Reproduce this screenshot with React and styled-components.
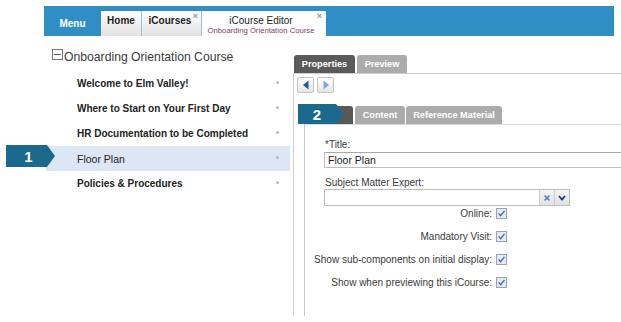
import React from "react";
import styled, { createGlobalStyle } from "styled-components";

const Global = createGlobalStyle`
  html, body { margin: 0; padding: 0; background: #fff; }
  body { font-family: "Liberation Sans", Arial, sans-serif; color: #333; }
`;

const Page = styled.div`
  width: 621px;
  height: 316px;
  display: flex;
  flex-direction: column;
  overflow: hidden;
`;

const TopBar = styled.div`
  margin: 6px 0 0 44px;
  width: 570px;
  height: 30px;
  background: #2f8fc4;
  display: flex;
  align-items: flex-end;
`;

const MenuTab = styled.div`
  width: 57px;
  height: 30px;
  box-sizing: border-box;
  padding-top: 4px;
  display: flex;
  align-items: center;
  justify-content: center;
  color: #fff;
  font-weight: bold;
  font-size: 10px;
`;

const Tab = styled.div`
  position: relative;
  width: ${(p) => p.$w}px;
  height: 25px;
  box-sizing: border-box;
  padding-top: 4px;
  padding-right: ${(p) => p.$pr || 0}px;
  border-right: 1px solid #8fc3e0;
  background: linear-gradient(#ffffff, #e2e2e2);
  font-size: 10px;
  font-weight: bold;
  color: #222;
  line-height: 12px;
  text-align: center;
`;

const ActiveTab = styled.div`
  position: relative;
  width: 124px;
  height: 25px;
  box-sizing: border-box;
  padding: 4px 6px 0 0;
  background: #fff;
  text-align: center;
`;

const TabTitle = styled.div`
  font-size: 10px;
  line-height: 11px;
  color: #222;
`;

const TabSub = styled.div`
  font-size: 7.7px;
  line-height: 9px;
  color: #7e3d63;
`;

const Close = styled.span`
  position: absolute;
  top: 1px;
  right: ${(p) => p.$r}px;
  font-size: 9px;
  font-weight: bold;
  color: #999;
  line-height: 9px;
`;

const Main = styled.div`
  flex: 1;
  display: flex;
  min-height: 0;
`;

const LeftPanel = styled.div`
  width: 293px;
  flex: none;
`;

const TreeHeader = styled.div`
  margin: 12px 0 0 52px;
  display: flex;
  align-items: flex-start;
  gap: 1px;
  font-size: 12.2px;
  line-height: 18px;
  color: #3a3a3a;
`;

const MinusBox = styled.span`
  margin-top: 1px;
  width: 11px;
  height: 11px;
  box-sizing: border-box;
  border: 1px solid #777;
  background: #fff;
  display: flex;
  align-items: center;
  justify-content: center;
  &::after {
    content: "";
    width: 7px;
    height: 1px;
    background: #555;
  }
`;

const TreeList = styled.div`
  margin-top: 5px;
  display: flex;
  flex-direction: column;
`;

const TreeRow = styled.div`
  position: relative;
  margin-left: 46px;
  width: 244px;
  height: 25px;
  box-sizing: border-box;
  padding: 0 11px 0 31px;
  display: flex;
  align-items: center;
  justify-content: space-between;
  background: ${(p) => (p.$selected ? "#dce6f5" : "transparent")};
  font-size: ${(p) => (p.$selected ? "10.5px" : "10px")};
  font-weight: ${(p) => (p.$selected ? "normal" : "bold")};
  color: #222;
`;

const Dot = styled.span`
  width: 3px;
  height: 3px;
  border-radius: 50%;
  background: #bbb;
  margin-top: -3px;
`;

const Callout = styled.div`
  position: absolute;
  left: ${(p) => p.$left}px;
  top: -1px;
  width: ${(p) => p.$w}px;
  height: ${(p) => p.$h}px;
  box-sizing: border-box;
  padding-right: ${(p) => p.$pr}px;
  background: #1b6a8e;
  clip-path: polygon(0 0, calc(100% - 8px) 0, 100% 50%, calc(100% - 8px) 100%, 0 100%);
  color: #fff;
  font-weight: bold;
  font-size: 15px;
  display: flex;
  align-items: center;
  justify-content: center;
  z-index: 2;
`;

const RightPanel = styled.div`
  flex: 1;
  padding-top: 19px;
  display: flex;
  flex-direction: column;
  min-width: 0;
`;

const TopTabs = styled.div`
  display: flex;
  gap: 2px;
  margin-left: 1px;
`;

const PanelTab = styled.div`
  width: ${(p) => p.$w}px;
  height: 18px;
  border-radius: 3px 3px 0 0;
  background: ${(p) => (p.$active ? "#5a5a5a" : "#ababab")};
  color: #fff;
  font-size: 9.2px;
  font-weight: bold;
  display: flex;
  align-items: center;
  justify-content: center;
`;

const TabBody = styled.div`
  flex: 1;
  border-top: 1px solid #cfcfcf;
  border-left: 1px solid #cfcfcf;
  display: flex;
  flex-direction: column;
`;

const NavRow = styled.div`
  display: flex;
  gap: 3px;
  padding: 3px 0 0 3px;
`;

const NavButton = styled.div`
  width: 17px;
  height: 16px;
  box-sizing: border-box;
  border: 1px solid #c4c4c4;
  border-radius: 2px;
  background: linear-gradient(#ffffff, #e6e6e6);
  display: flex;
  align-items: center;
  justify-content: center;
`;

const StepArea = styled.div`
  position: relative;
  flex: 1;
  margin: 12px 0 0 10px;
  display: flex;
  flex-direction: column;
`;

const StepTabs = styled.div`
  display: flex;
  gap: 1px;
  margin-top: 1px;
`;

const StepTab = styled.div`
  width: ${(p) => p.$w}px;
  height: 18px;
  border-radius: 3px 3px 0 0;
  background: ${(p) => (p.$active ? "#585858" : "#ababab")};
  color: #fff;
  font-size: 9.2px;
  font-weight: bold;
  display: flex;
  align-items: center;
  justify-content: center;
  margin-right: ${(p) => p.$mr || 0}px;
`;

const StepBody = styled.div`
  flex: 1;
  border-top: 1px solid #dadada;
  border-left: 1px solid #c8c8c8;
  padding: 14px 0 0 20px;
`;

const Label = styled.div`
  font-size: 10px;
  line-height: 12px;
  color: #3a3a3a;
  margin-top: ${(p) => p.$mt || 0}px;
`;

const TextInput = styled.div`
  margin: 1px 0 0 -1px;
  width: 320px;
  height: 16px;
  box-sizing: border-box;
  border: 1px solid #bdbdbd;
  border-top-color: #a9a9a9;
  padding-left: 3px;
  font-size: 10.5px;
  line-height: 14px;
  color: #222;
`;

const Combo = styled.div`
  margin-left: -1px;
  width: 246px;
  height: 17px;
  box-sizing: border-box;
  border: 1px solid #bdbdbd;
  display: flex;
`;

const ComboField = styled.div`
  flex: 1;
`;

const ComboButton = styled.div`
  width: 14px;
  border-left: 1px solid #cdcdcd;
  background: linear-gradient(#f4f4f4, #e2e2e2);
  display: flex;
  align-items: center;
  justify-content: center;
`;

const CheckList = styled.div`
  margin-left: -20px;
  width: 202px;
  display: flex;
  flex-direction: column;
  gap: 9px;
`;

const CheckRow = styled.div`
  height: 14px;
  display: flex;
  align-items: center;
  justify-content: flex-end;
  gap: 4px;
  font-size: 10px;
  color: #3a3a3a;
  white-space: nowrap;
`;

const CheckBox = () => (
  <svg width="11" height="11" viewBox="0 0 11 11">
    <rect x="0.5" y="0.5" width="10" height="10" fill="#e3eaf6" stroke="#9aa3b0" />
    <path d="M2.6 5.4 L4.6 7.7 L8.5 2.8" fill="none" stroke="#4466bb" strokeWidth="1.3" />
  </svg>
);

const items = [
  "Welcome to Elm Valley!",
  "Where to Start on Your First Day",
  "HR Documentation to be Completed",
  "Floor Plan",
  "Policies & Procedures",
];

const checks = [
  "Online:",
  "Mandatory Visit:",
  "Show sub-components on initial display:",
  "Show when previewing this iCourse:",
];

export default function App() {
  return (
    <>
      <Global />
      <Page>
        <TopBar>
          <MenuTab>Menu</MenuTab>
          <Tab $w={41}>Home</Tab>
          <Tab $w={60} $pr={3}>
            iCourses
            <Close $r={3}>×</Close>
          </Tab>
          <ActiveTab>
            <TabTitle>iCourse Editor</TabTitle>
            <TabSub>Onboarding Orientation Course</TabSub>
            <Close $r={4}>×</Close>
          </ActiveTab>
        </TopBar>
        <Main>
          <LeftPanel>
            <TreeHeader>
              <MinusBox />
              Onboarding Orientation Course
            </TreeHeader>
            <TreeList>
              {items.map((t, i) => (
                <TreeRow key={t} $selected={i === 3}>
                  {i === 3 && (
                    <Callout $left={-40} $w={49} $h={22} $pr={4}>
                      1
                    </Callout>
                  )}
                  <span>{t}</span>
                  <Dot />
                </TreeRow>
              ))}
            </TreeList>
          </LeftPanel>
          <RightPanel>
            <TopTabs>
              <PanelTab $w={61} $active>Properties</PanelTab>
              <PanelTab $w={50}>Preview</PanelTab>
            </TopTabs>
            <TabBody>
              <NavRow>
                <NavButton>
                  <svg width="8" height="10" viewBox="0 0 8 10">
                    <path d="M6.5 0.5 L1 5 L6.5 9.5 Z" fill="#1f5b9a" />
                  </svg>
                </NavButton>
                <NavButton>
                  <svg width="8" height="10" viewBox="0 0 8 10">
                    <path d="M1.5 0.5 L7 5 L1.5 9.5 Z" fill="#7fa9d3" />
                  </svg>
                </NavButton>
              </NavRow>
              <StepArea>
                <Callout $left={-6} $w={46} $h={20} $pr={8}>
                  2
                </Callout>
                <StepTabs>
                  <StepTab $w={49} $active $mr={1} />
                  <StepTab $w={50}>Content</StepTab>
                  <StepTab $w={96}>Reference Material</StepTab>
                </StepTabs>
                <StepBody>
                  <Label>*Title:</Label>
                  <TextInput>Floor Plan</TextInput>
                  <Label $mt={9}>Subject Matter Expert:</Label>
                  <Combo>
                    <ComboField />
                    <ComboButton>
                      <svg width="8" height="8" viewBox="0 0 8 8">
                        <path d="M1.5 1.5 L6.5 6.5 M6.5 1.5 L1.5 6.5" stroke="#4c7fc0" strokeWidth="1.5" />
                      </svg>
                    </ComboButton>
                    <ComboButton>
                      <svg width="8" height="6" viewBox="0 0 8 6">
                        <path d="M1 1 L4 4.5 L7 1" fill="none" stroke="#1d3b7a" strokeWidth="1.8" />
                      </svg>
                    </ComboButton>
                  </Combo>
                  <CheckList>
                    {checks.map((c) => (
                      <CheckRow key={c}>
                        <span>{c}</span>
                        <CheckBox />
                      </CheckRow>
                    ))}
                  </CheckList>
                </StepBody>
              </StepArea>
            </TabBody>
          </RightPanel>
        </Main>
      </Page>
    </>
  );
}
